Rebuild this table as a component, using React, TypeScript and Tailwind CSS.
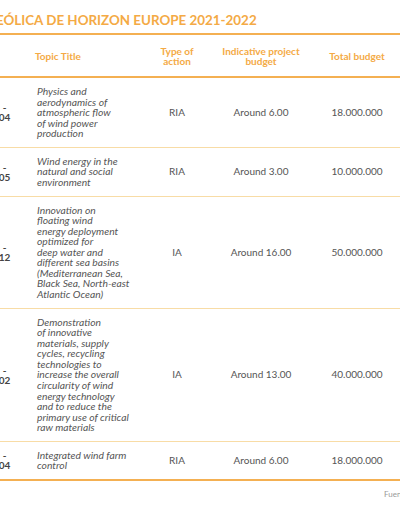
import React from "react";

type Row = { code: string; lines: string[]; type: string; ind: string; total: string };

const rows: Row[] = [
  {
    code: "04",
    lines: ["Physics and", "aerodynamics of", "atmospheric flow", "of wind power", "production"],
    type: "RIA",
    ind: "Around 6.00",
    total: "18.000.000",
  },
  {
    code: "05",
    lines: ["Wind energy in the", "natural and social", "environment"],
    type: "RIA",
    ind: "Around 3.00",
    total: "10.000.000",
  },
  {
    code: "12",
    lines: [
      "Innovation on",
      "floating wind",
      "energy deployment",
      "optimized for",
      "deep water and",
      "different sea basins",
      "(Mediterranean Sea,",
      "Black Sea, North-east",
      "Atlantic Ocean)",
    ],
    type: "IA",
    ind: "Around 16.00",
    total: "50.000.000",
  },
  {
    code: "02",
    lines: [
      "Demonstration",
      "of innovative",
      "materials, supply",
      "cycles, recycling",
      "technologies to",
      "increase the overall",
      "circularity of wind",
      "energy technology",
      "and to reduce the",
      "primary use of critical",
      "raw materials",
    ],
    type: "IA",
    ind: "Around 13.00",
    total: "40.000.000",
  },
  {
    code: "04",
    lines: ["Integrated wind farm", "control"],
    type: "RIA",
    ind: "Around 6.00",
    total: "18.000.000",
  },
];

export default function App() {
  return (
    <div
      className="w-[400px] h-[516px] overflow-hidden bg-white"
      style={{ fontFamily: "Lato, 'Open Sans', sans-serif" }}
    >
      <div className="ml-[-26px] w-[432px]">
        <h1 className="pt-[11px] pl-[22px] h-[33px] text-[13.4px] leading-[18px] font-bold text-[#f4aa45] whitespace-nowrap">
          EÓLICA DE HORIZON EUROPE 2021-2022
        </h1>
        <div className="border-t-2 border-b-2 border-[#f4b052]">
          <div className="grid grid-cols-[61px_105px_74px_94px_98px] h-[43px] items-center border-b-2 border-[#f4b052] text-[10px] leading-[10px] font-bold text-[#f4aa45]">
            <div />
            <div>Topic Title</div>
            <div className="text-center">
              Type of
              <br />
              action
            </div>
            <div className="text-center">
              Indicative project
              <br />
              budget
            </div>
            <div className="text-center">Total budget</div>
          </div>
          {rows.map((r, i) => (
            <div
              key={i}
              className={
                "grid grid-cols-[61px_105px_74px_94px_98px] items-center py-[8px] text-[#555] " +
                (i < rows.length - 1 ? "border-b border-[#f8dca6]" : "")
              }
            >
              <div className="text-center text-[10px] leading-[10px] font-bold text-[#444]">
                <div>-</div>
                <div>{r.code}</div>
              </div>
              <div className="pl-[2px] italic text-[10.3px] leading-[10.56px] whitespace-nowrap">
                {r.lines.map((l, j) => (
                  <div key={j}>{l}</div>
                ))}
              </div>
              <div className="text-center text-[10px]">{r.type}</div>
              <div className="text-center text-[10px]">{r.ind}</div>
              <div className="text-center text-[10px]">{r.total}</div>
            </div>
          ))}
        </div>
        <div className="pt-[8px] pl-[410px] text-[8px] leading-[10px] text-[#999] whitespace-nowrap">
          Fuente: Comisión Europea
        </div>
      </div>
    </div>
  );
}
